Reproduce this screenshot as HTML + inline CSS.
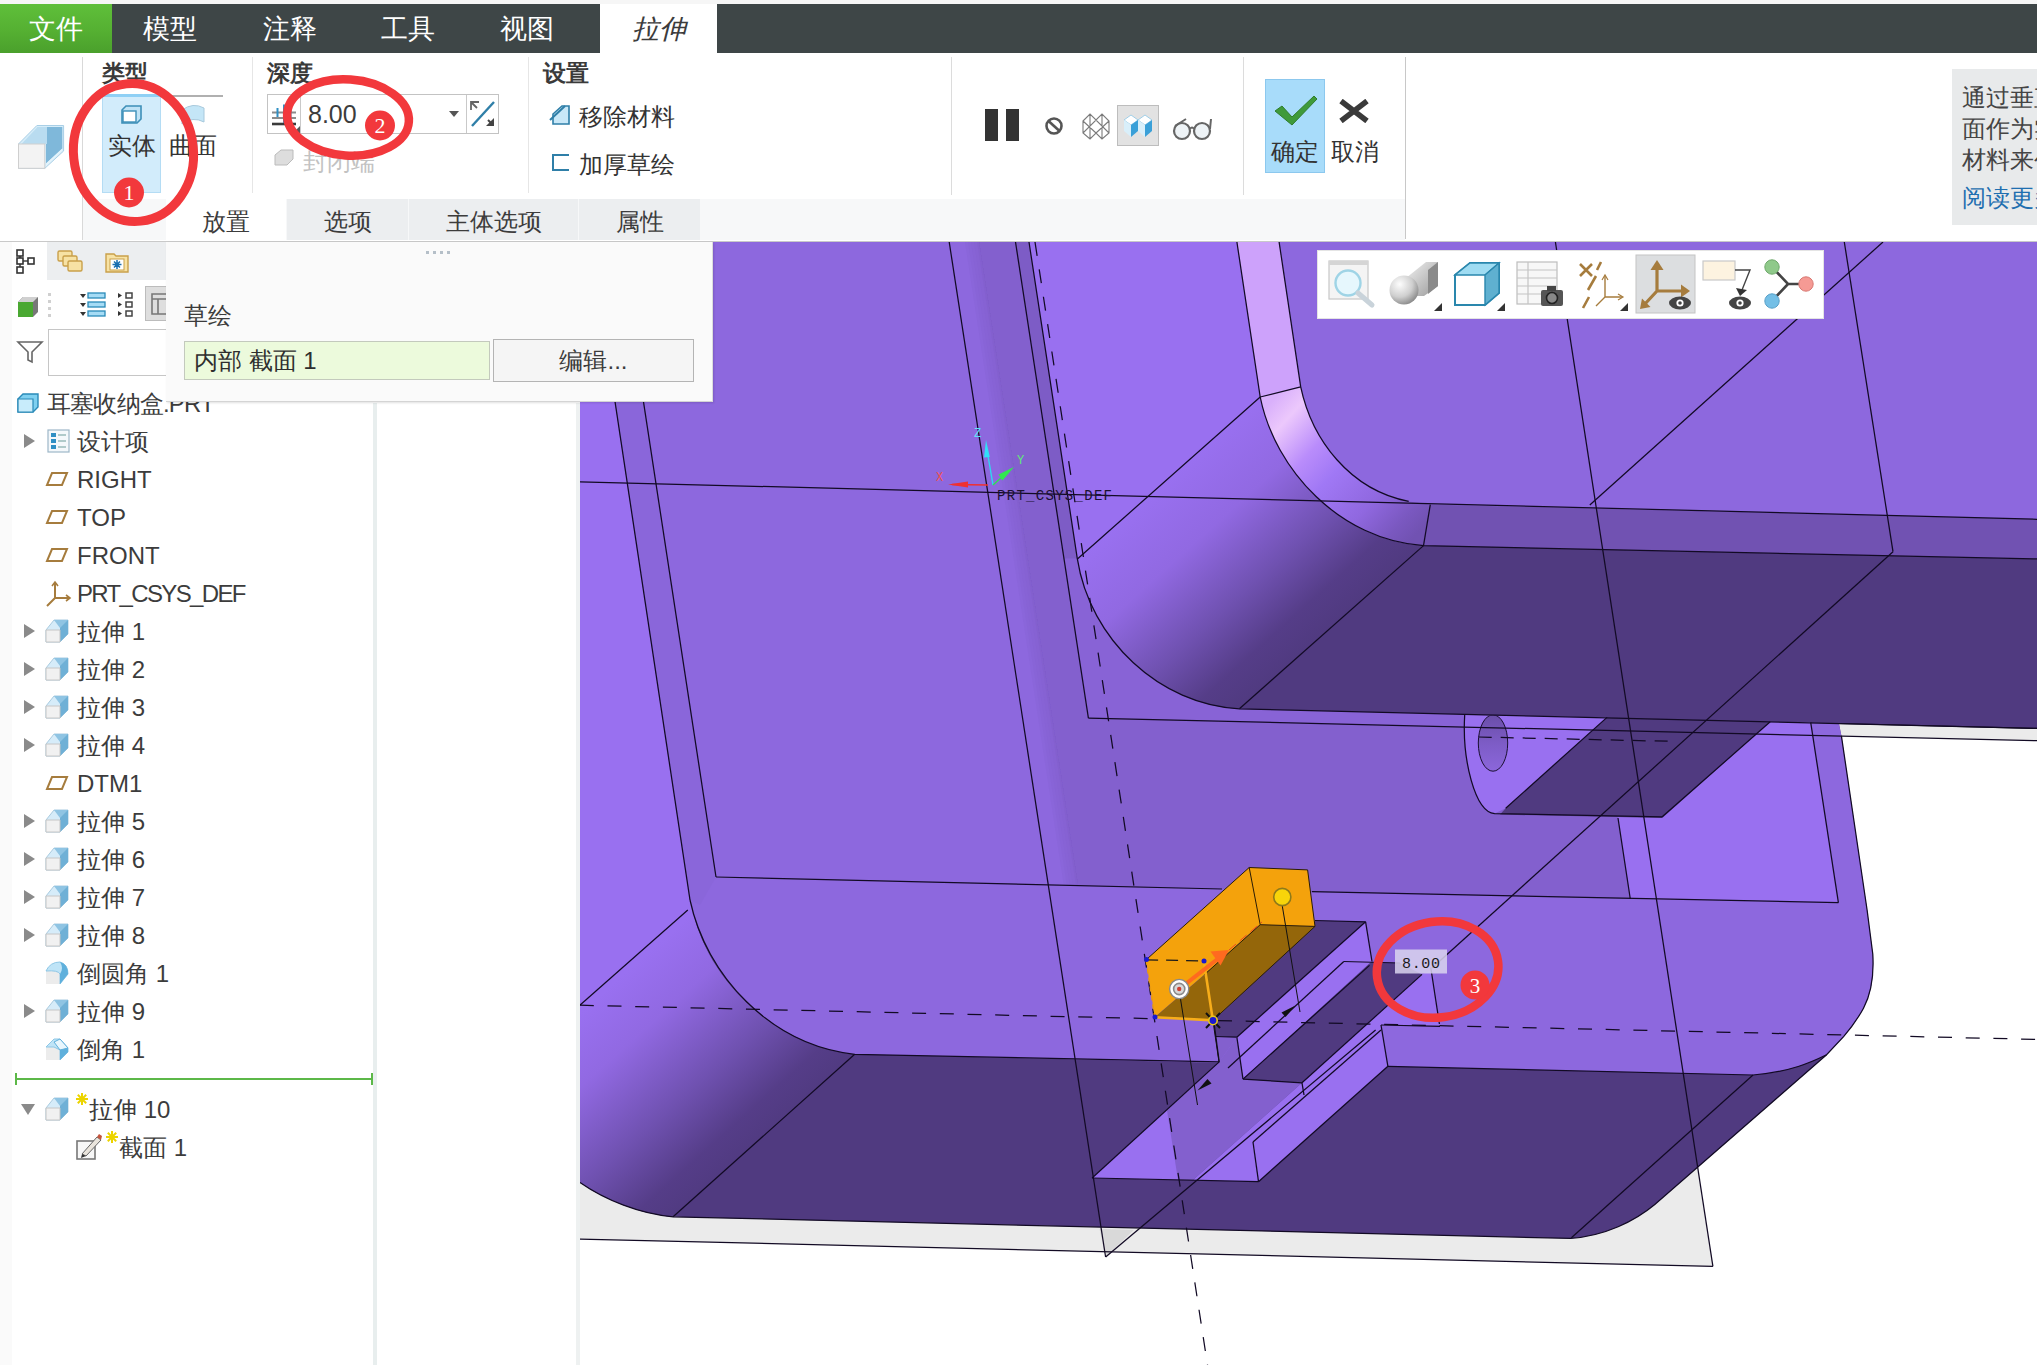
<!DOCTYPE html>
<html><head><meta charset="utf-8">
<style>
html,body{margin:0;padding:0;}
body{width:2037px;height:1365px;position:relative;overflow:hidden;background:#fff;font-family:"Liberation Sans",sans-serif;color:#3c3c3c;}
.a{position:absolute;}
.t{position:absolute;white-space:nowrap;line-height:1;}
#topbar{left:0;top:4px;width:2037px;height:49px;background:#3e4647;}
#topbar .tab{position:absolute;top:0;height:49px;line-height:51px;font-size:27px;color:#fff;text-align:center;}
#filetab{left:0;width:112px;background:linear-gradient(180deg,#5fbf3a 0%,#55b032 55%,#4aa02c 100%);}
.sub{position:absolute;top:199px;height:41px;background:#eceef0;font-size:24px;line-height:45px;text-align:center;color:#3c3c3c;}
.row{position:absolute;left:0;height:38px;width:372px;}
.row .tx{position:absolute;left:77px;top:6px;font-size:24px;line-height:28px;white-space:nowrap;color:#3c3c3c;}
.row .ar{position:absolute;left:24px;top:12px;width:0;height:0;border-left:11px solid #8a8a8a;border-top:7px solid transparent;border-bottom:7px solid transparent;}
.row > svg{position:absolute;left:44px;top:6px;}
</style></head><body>
<!-- top strip -->
<div class="a" style="left:0;top:0;width:2037px;height:4px;background:#f6f6f6"></div>
<div class="a" id="topbar">
 <div class="tab" id="filetab">文件</div>
 <div class="tab" style="left:112px;width:116px;">模型</div>
 <div class="tab" style="left:232px;width:116px;">注释</div>
 <div class="tab" style="left:350px;width:116px;">工具</div>
 <div class="tab" style="left:469px;width:116px;">视图</div>
 <div class="tab" style="left:600px;width:117px;background:#fff;color:#3c3c3c;font-style:italic;height:50px;">拉伸</div>
</div>
<!-- ribbon -->
<div class="a" style="left:82px;top:57px;width:1px;height:183px;background:#d9d9d9"></div>
<div class="a" style="left:252px;top:57px;width:1px;height:136px;background:#e6e6e6"></div>
<div class="a" style="left:528px;top:57px;width:1px;height:136px;background:#e6e6e6"></div>
<div class="a" style="left:951px;top:57px;width:1px;height:138px;background:#dcdcdc"></div>
<div class="a" style="left:1243px;top:57px;width:1px;height:138px;background:#dcdcdc"></div>
<div class="a" style="left:1405px;top:57px;width:1px;height:182px;background:#c8c8c8"></div>
<!-- big extrude icon -->
<svg class="a" style="left:16px;top:122px" width="50" height="50" viewBox="16 122 50 50">
 <polygon points="18.5,144 36.9,125.5 63.6,125.5 63.6,151 44.8,168.3 18.5,168.3" fill="#d6edf9" stroke="#a9cfe6" stroke-width="1"/>
 <polygon points="37.5,127 62.3,127 62.3,148.5 46,163.5 46,144" fill="#7fb8da"/>
 <polygon points="37.5,127 47,127 47,144 21.5,144" fill="#b9dcf0"/>
 <polygon points="46,163.5 62.3,148.5 62.3,150.5 46,166.5" fill="#e3f3fb"/>
 <rect x="18.5" y="144" width="26.3" height="24.3" fill="#f3f3f3" stroke="#cfcfcf" stroke-width="1"/>
</svg>
<div class="t" style="left:102px;top:62px;font-size:23px;font-weight:bold;color:#3a3a3a">类型</div>
<div class="t" style="left:267px;top:62px;font-size:23px;font-weight:bold;color:#3a3a3a">深度</div>
<div class="t" style="left:543px;top:62px;font-size:23px;font-weight:bold;color:#3a3a3a">设置</div>
<!-- solid button -->
<div class="a" style="left:102px;top:94px;width:59px;height:99px;background:#d2ecfb;border-top:3px solid #8fd0f5;box-sizing:border-box;border-left:1px solid #b4dcf4;border-right:1px solid #b4dcf4;border-bottom:1px solid #b4dcf4"></div>
<div class="a" style="left:162px;top:95px;width:61px;height:2px;background:#b0b0b0"></div>
<svg class="a" style="left:120px;top:104px" width="24" height="22" viewBox="0 0 24 22"><polygon points="2,6 6,2 21,2 21,15 17,19 2,19" fill="#bfe3f6" stroke="#3d8fb8" stroke-width="1.6"/><rect x="3" y="7" width="13" height="11" fill="#fff" stroke="#3d8fb8" stroke-width="1.4"/></svg>
<svg class="a" style="left:180px;top:104px" width="26" height="22" viewBox="0 0 26 22"><path d="M2,6 Q13,-2 24,4 L24,18 Q13,12 2,20 Z" fill="#c4e6f7" stroke="#a8c9dc" stroke-width="1"/></svg>
<div class="t" style="left:108px;top:134px;font-size:24px;color:#333">实体</div>
<div class="t" style="left:169px;top:134px;font-size:24px;color:#333">曲面</div>
<!-- depth input -->
<div class="a" style="left:267px;top:94px;width:232px;height:40px;border:1px solid #c3c3c3;box-sizing:border-box;background:#fff"></div>
<div class="a" style="left:300px;top:95px;width:1px;height:38px;background:#c9c9c9"></div>
<div class="a" style="left:466px;top:95px;width:1px;height:38px;background:#c9c9c9"></div>
<svg class="a" style="left:268px;top:98px" width="34" height="36" viewBox="268 98 34 36"><path d="M272,112.5 H296 M272,118 H296" stroke="#8c8c8c" stroke-width="2" fill="none"/><path d="M272,124 H296" stroke="#3a3a3a" stroke-width="2.6" fill="none"/><path d="M284,104.5 V123 M277.5,108 V117 M290.5,108 V117" stroke="#2f8fc4" stroke-width="2" fill="none"/><polygon points="293,133 300,133 300,126" fill="#555"/></svg>
<div class="t" style="left:308px;top:102px;font-size:25px;color:#3c3c3c">8.00</div>
<div class="a" style="left:449px;top:111px;width:0;height:0;border-top:6px solid #555;border-left:5px solid transparent;border-right:5px solid transparent"></div>
<svg class="a" style="left:468px;top:98px" width="30" height="32" viewBox="0 0 30 32"><path d="M4,28 L26,4" stroke="#2f7fa8" stroke-width="2.4" fill="none"/><path d="M3,12 L3,4 L11,4 M3,4 L9,10" stroke="#666" stroke-width="1.8" fill="none"/><polygon points="26,28 18,28 26,20" fill="#444"/><path d="M20,22 L25,27" stroke="#444" stroke-width="2"/></svg>
<svg class="a" style="left:273px;top:147px" width="22" height="20" viewBox="0 0 22 20"><polygon points="2,8 8,3 20,3 20,12 14,18 2,18" fill="#ddd" stroke="#bbb"/></svg>
<div class="t" style="left:303px;top:150px;font-size:24px;color:#c2c2c2">封闭端</div>
<!-- settings -->
<svg class="a" style="left:548px;top:104px" width="24" height="22" viewBox="0 0 24 22"><polygon points="5,20 5,10 14,2 21,2 21,20" fill="#c9e8f8" stroke="#2f7fa8" stroke-width="1.6"/><path d="M2,16 L17,2" stroke="#2f7fa8" stroke-width="2"/></svg>
<div class="t" style="left:579px;top:105px;font-size:24px;color:#333">移除材料</div>
<svg class="a" style="left:550px;top:152px" width="22" height="22" viewBox="0 0 22 22"><path d="M19,3 H3 V18 H19" stroke="#2f7fa8" stroke-width="2" fill="none"/></svg>
<div class="t" style="left:579px;top:153px;font-size:24px;color:#333">加厚草绘</div>
<!-- controls -->
<div class="a" style="left:985px;top:109px;width:13px;height:32px;background:#333"></div>
<div class="a" style="left:1006px;top:109px;width:13px;height:32px;background:#333"></div>
<svg class="a" style="left:1042px;top:114px" width="24" height="24" viewBox="0 0 24 24"><circle cx="12" cy="12" r="7.5" fill="none" stroke="#555" stroke-width="2.6"/><path d="M6.5,7 L17.5,17" stroke="#555" stroke-width="2.6"/></svg>
<svg class="a" style="left:1080px;top:111px" width="32" height="30" viewBox="0 0 32 30"><path d="M3,10 L10,3 L16,9 L22,3 L29,10 L29,22 L22,28 L16,22 L10,28 L3,22 Z M10,3 V28 M22,3 V28 M3,10 L16,22 M29,10 L16,22 M3,22 L16,9 L29,22" stroke="#7b7b7b" stroke-width="1.1" fill="none"/></svg>
<div class="a" style="left:1117px;top:105px;width:42px;height:41px;background:#e2e2e2;border:1px solid #bdbdbd;box-sizing:border-box"></div>
<svg class="a" style="left:1122px;top:112px" width="32" height="28" viewBox="0 0 32 28"><polygon points="2,8 9,3 16,8 9,13" fill="#fff" stroke="#8cc7e6" stroke-width=".8"/><polygon points="2,8 9,13 9,25 2,19" fill="#d9effa"/><polygon points="9,13 16,8 16,19 9,25" fill="#3aa0d8"/><polygon points="16,8 23,3 30,8 23,13" fill="#fff" stroke="#8cc7e6" stroke-width=".8"/><polygon points="16,8 23,13 23,25 16,19" fill="#d9effa"/><polygon points="23,13 30,8 30,19 23,25" fill="#3aa0d8"/></svg>
<svg class="a" style="left:1170px;top:114px" width="46" height="30" viewBox="0 0 46 30"><circle cx="12" cy="17" r="8" fill="#eef3f6" stroke="#666" stroke-width="2.2"/><circle cx="32" cy="17" r="8" fill="#eef3f6" stroke="#666" stroke-width="2.2"/><path d="M20,15 Q22,12 24,15 M5,12 L16,5 M40,15 L41,5" stroke="#666" stroke-width="2" fill="none"/></svg>
<div class="a" style="left:1265px;top:79px;width:60px;height:94px;background:#a8dcfa;border:1px solid #8cc8ee;box-sizing:border-box"></div>
<svg class="a" style="left:1272px;top:93px" width="48" height="34" viewBox="0 0 48 34"><path d="M3,18 L10,13 L20,24 L42,3 L45,6 L20,32 Z" fill="#3f9a3a" stroke="#2f7d2d" stroke-width="1"/></svg>
<div class="t" style="left:1271px;top:140px;font-size:24px;color:#333">确定</div>
<svg class="a" style="left:1338px;top:99px" width="32" height="24" viewBox="0 0 32 24"><path d="M3,2 L29,22 M29,2 L3,22" stroke="#3a3a3a" stroke-width="5.5"/></svg>
<div class="t" style="left:1331px;top:140px;font-size:24px;color:#333">取消</div>
<!-- help box -->
<div class="a" style="left:1952px;top:69px;width:85px;height:156px;background:#e8eaeb"></div>
<div class="t" style="left:1962px;top:86px;font-size:24px;color:#444">通过垂直</div>
<div class="t" style="left:1962px;top:117px;font-size:24px;color:#444">面作为实</div>
<div class="t" style="left:1962px;top:148px;font-size:24px;color:#444">材料来创</div>
<div class="t" style="left:1962px;top:186px;font-size:24px;color:#1f6fb0">阅读更多</div>
<!-- subtabs -->
<div class="a" style="left:83px;top:199px;width:1322px;height:41px;background:#f7f8f9"></div>
<div class="sub" style="left:166px;width:120px;background:#fff">放置</div>
<div class="sub" style="left:287px;width:121px">选项</div>
<div class="sub" style="left:409px;width:169px">主体选项</div>
<div class="sub" style="left:579px;width:121px">属性</div>
<div class="a" style="left:0;top:241px;width:2037px;height:1px;background:#c9c9c9"></div>
<!-- left panel -->
<div class="a" style="left:0;top:242px;width:12px;height:1123px;background:#fafafa"></div>
<div class="a" style="left:47px;top:242px;width:119px;height:38px;background:#eceef0"></div>
<svg class="a" style="left:15px;top:248px" width="24" height="26" viewBox="0 0 24 26"><path d="M5,6 V22 M5,13 H13 " stroke="#444" stroke-width="1.6" fill="none"/><rect x="2" y="2" width="6" height="6" fill="#fff" stroke="#333" stroke-width="1.6"/><rect x="2" y="10" width="6" height="6" fill="#fff" stroke="#333" stroke-width="1.6"/><rect x="2" y="19" width="6" height="6" fill="#fff" stroke="#333" stroke-width="1.6"/><rect x="13" y="10" width="6" height="6" fill="#fff" stroke="#333" stroke-width="1.6"/></svg>
<svg class="a" style="left:56px;top:248px" width="28" height="26" viewBox="0 0 28 26"><rect x="2" y="3" width="14" height="10" rx="1.5" fill="#f7e2a4" stroke="#c9a04a" stroke-width="1.4"/><rect x="7" y="8" width="14" height="10" rx="1.5" fill="#f7e2a4" stroke="#c9a04a" stroke-width="1.4"/><rect x="12" y="13" width="14" height="10" rx="1.5" fill="#f7e2a4" stroke="#c9a04a" stroke-width="1.4"/></svg>
<svg class="a" style="left:104px;top:250px" width="26" height="24" viewBox="0 0 26 24"><path d="M2,4 H10 L12,6 H24 V22 H2 Z" fill="#f7e2a4" stroke="#c9a04a" stroke-width="1.4"/><rect x="6" y="9" width="14" height="11" fill="#fff" stroke="#c9a04a" stroke-width="1"/><path d="M13,10 V19 M8.5,14.5 H17.5 M10,11.5 L16,17.5 M16,11.5 L10,17.5" stroke="#1b6fb0" stroke-width="1.5"/></svg>
<svg class="a" style="left:16px;top:295px" width="24" height="24" viewBox="0 0 24 24"><polygon points="2,7 7,2 22,2 22,17 17,22 2,22" fill="#777" /><polygon points="2,7 17,7 17,22 2,22" fill="#4aa832"/><polygon points="2,7 7,2 22,2 17,7" fill="#d0d0d0"/></svg>
<div class="a" style="left:48px;top:293px;width:3px;height:26px;background:repeating-linear-gradient(180deg,#d0d0d0 0 3px,transparent 3px 7px)"></div>
<svg class="a" style="left:79px;top:291px" width="28" height="28" viewBox="0 0 28 28"><rect x="9" y="2" width="17" height="5" fill="#a6dcf5" stroke="#2a8ab8" stroke-width="1.3"/><rect x="9" y="11" width="17" height="5" fill="#a6dcf5" stroke="#2a8ab8" stroke-width="1.3"/><rect x="9" y="20" width="17" height="5" fill="#a6dcf5" stroke="#2a8ab8" stroke-width="1.3"/><polygon points="1,3 7,3 4,7" fill="#333"/><polygon points="1,12 7,12 4,16" fill="#333"/><polygon points="1,21 7,21 4,25" fill="#333"/></svg>
<svg class="a" style="left:117px;top:291px" width="18" height="28" viewBox="0 0 18 28"><rect x="9" y="2" width="6" height="5" fill="#fff" stroke="#444" stroke-width="1.5"/><rect x="9" y="11" width="6" height="5" fill="#fff" stroke="#444" stroke-width="1.5"/><rect x="9" y="20" width="6" height="5" fill="#fff" stroke="#444" stroke-width="1.5"/><polygon points="1,2 5,4.5 1,7" fill="#333"/><polygon points="1,11 5,13.5 1,16" fill="#333"/><polygon points="1,20 5,22.5 1,25" fill="#333"/></svg>
<div class="a" style="left:145px;top:286px;width:30px;height:35px;background:#dedede;border:1px solid #bcbcbc;box-sizing:border-box"></div>
<svg class="a" style="left:150px;top:292px" width="20" height="24" viewBox="0 0 20 24"><path d="M2,2 H18 V22 H2 Z M2,7 H18 M8,7 V22" fill="none" stroke="#777" stroke-width="1.6"/></svg>
<svg class="a" style="left:16px;top:340px" width="28" height="24" viewBox="0 0 28 24"><path d="M2,2 H26 L16,12 V22 L12,20 V12 Z" fill="#fff" stroke="#666" stroke-width="1.6"/></svg>
<div class="a" style="left:48px;top:329px;width:140px;height:47px;border:1px solid #c6c6c6;box-sizing:border-box;background:#fff"></div>
<div class="row" style="top:384px"><span style="position:absolute;left:16px;top:7px"><svg width="24" height="24" viewBox="0 0 24 24"><polygon points="2,8 7,3 22,3 22,16 17,21 2,21" fill="#7fd0f0" stroke="#2a8ab8" stroke-width="1.4"/><polygon points="2,8 17,8 17,21 2,21" fill="#c8ecfb" stroke="#2a8ab8" stroke-width="1.2"/></svg></span><span class="tx" style="left:47px;letter-spacing:-0.8px">耳塞收纳盒.PRT</span></div>
<div class="row" style="top:422px"><span class="ar"></span><svg width="26" height="26" viewBox="-2 0 26 26"><rect x="2" y="2" width="21" height="22" fill="#f4f8fb" stroke="#9db7c8" stroke-width="1.2"/><rect x="5" y="5" width="5" height="4" fill="#2f8fc4"/><rect x="5" y="11" width="5" height="4" fill="#2f8fc4"/><rect x="5" y="17" width="5" height="4" fill="#2f8fc4"/><path d="M12,7 H20 M12,13 H20 M12,19 H20" stroke="#9bb" stroke-width="1.4"/></svg><span class="tx">设计项</span></div>
<div class="row" style="top:460px"><svg width="26" height="26" viewBox="0 0 26 26"><polygon points="8,7 23,7 18,19 3,19" fill="none" stroke="#a67c3d" stroke-width="2"/></svg><span class="tx">RIGHT</span></div>
<div class="row" style="top:498px"><svg width="26" height="26" viewBox="0 0 26 26"><polygon points="8,7 23,7 18,19 3,19" fill="none" stroke="#a67c3d" stroke-width="2"/></svg><span class="tx">TOP</span></div>
<div class="row" style="top:536px"><svg width="26" height="26" viewBox="0 0 26 26"><polygon points="8,7 23,7 18,19 3,19" fill="none" stroke="#a67c3d" stroke-width="2"/></svg><span class="tx">FRONT</span></div>
<div class="row" style="top:574px"><svg width="28" height="28" viewBox="0 0 28 28"><path d="M11,3 V18 H26 M11,18 L3,26" fill="none" stroke="#a67c3d" stroke-width="2"/><path d="M8,6 L11,2 L14,6 M22,15 L26,18 L22,21" fill="none" stroke="#a67c3d" stroke-width="1.6"/></svg><span class="tx" style="letter-spacing:-1.65px">PRT_CSYS_DEF</span></div>
<div class="row" style="top:612px"><span class="ar"></span><svg width="26" height="26" viewBox="0 0 26 26"><polygon points="2,12 10,2 24,2 24,16 16,24 2,24" fill="#d6ecf9" stroke="#a9cbe0" stroke-width="1"/><polygon points="10,2 24,2 24,16 16,10" fill="#8fc4e3"/><polygon points="16,10 24,2 24,16 16,24" fill="#6fb0d6"/><polygon points="2,12 16,12 16,24 2,24" fill="#f1f1f1" stroke="#c6c6c6" stroke-width="1"/></svg><span class="tx">拉伸 1</span></div>
<div class="row" style="top:650px"><span class="ar"></span><svg width="26" height="26" viewBox="0 0 26 26"><polygon points="2,12 10,2 24,2 24,16 16,24 2,24" fill="#d6ecf9" stroke="#a9cbe0" stroke-width="1"/><polygon points="10,2 24,2 24,16 16,10" fill="#8fc4e3"/><polygon points="16,10 24,2 24,16 16,24" fill="#6fb0d6"/><polygon points="2,12 16,12 16,24 2,24" fill="#f1f1f1" stroke="#c6c6c6" stroke-width="1"/></svg><span class="tx">拉伸 2</span></div>
<div class="row" style="top:688px"><span class="ar"></span><svg width="26" height="26" viewBox="0 0 26 26"><polygon points="2,12 10,2 24,2 24,16 16,24 2,24" fill="#d6ecf9" stroke="#a9cbe0" stroke-width="1"/><polygon points="10,2 24,2 24,16 16,10" fill="#8fc4e3"/><polygon points="16,10 24,2 24,16 16,24" fill="#6fb0d6"/><polygon points="2,12 16,12 16,24 2,24" fill="#f1f1f1" stroke="#c6c6c6" stroke-width="1"/></svg><span class="tx">拉伸 3</span></div>
<div class="row" style="top:726px"><span class="ar"></span><svg width="26" height="26" viewBox="0 0 26 26"><polygon points="2,12 10,2 24,2 24,16 16,24 2,24" fill="#d6ecf9" stroke="#a9cbe0" stroke-width="1"/><polygon points="10,2 24,2 24,16 16,10" fill="#8fc4e3"/><polygon points="16,10 24,2 24,16 16,24" fill="#6fb0d6"/><polygon points="2,12 16,12 16,24 2,24" fill="#f1f1f1" stroke="#c6c6c6" stroke-width="1"/></svg><span class="tx">拉伸 4</span></div>
<div class="row" style="top:764px"><svg width="26" height="26" viewBox="0 0 26 26"><polygon points="8,7 23,7 18,19 3,19" fill="none" stroke="#a67c3d" stroke-width="2"/></svg><span class="tx">DTM1</span></div>
<div class="row" style="top:802px"><span class="ar"></span><svg width="26" height="26" viewBox="0 0 26 26"><polygon points="2,12 10,2 24,2 24,16 16,24 2,24" fill="#d6ecf9" stroke="#a9cbe0" stroke-width="1"/><polygon points="10,2 24,2 24,16 16,10" fill="#8fc4e3"/><polygon points="16,10 24,2 24,16 16,24" fill="#6fb0d6"/><polygon points="2,12 16,12 16,24 2,24" fill="#f1f1f1" stroke="#c6c6c6" stroke-width="1"/></svg><span class="tx">拉伸 5</span></div>
<div class="row" style="top:840px"><span class="ar"></span><svg width="26" height="26" viewBox="0 0 26 26"><polygon points="2,12 10,2 24,2 24,16 16,24 2,24" fill="#d6ecf9" stroke="#a9cbe0" stroke-width="1"/><polygon points="10,2 24,2 24,16 16,10" fill="#8fc4e3"/><polygon points="16,10 24,2 24,16 16,24" fill="#6fb0d6"/><polygon points="2,12 16,12 16,24 2,24" fill="#f1f1f1" stroke="#c6c6c6" stroke-width="1"/></svg><span class="tx">拉伸 6</span></div>
<div class="row" style="top:878px"><span class="ar"></span><svg width="26" height="26" viewBox="0 0 26 26"><polygon points="2,12 10,2 24,2 24,16 16,24 2,24" fill="#d6ecf9" stroke="#a9cbe0" stroke-width="1"/><polygon points="10,2 24,2 24,16 16,10" fill="#8fc4e3"/><polygon points="16,10 24,2 24,16 16,24" fill="#6fb0d6"/><polygon points="2,12 16,12 16,24 2,24" fill="#f1f1f1" stroke="#c6c6c6" stroke-width="1"/></svg><span class="tx">拉伸 7</span></div>
<div class="row" style="top:916px"><span class="ar"></span><svg width="26" height="26" viewBox="0 0 26 26"><polygon points="2,12 10,2 24,2 24,16 16,24 2,24" fill="#d6ecf9" stroke="#a9cbe0" stroke-width="1"/><polygon points="10,2 24,2 24,16 16,10" fill="#8fc4e3"/><polygon points="16,10 24,2 24,16 16,24" fill="#6fb0d6"/><polygon points="2,12 16,12 16,24 2,24" fill="#f1f1f1" stroke="#c6c6c6" stroke-width="1"/></svg><span class="tx">拉伸 8</span></div>
<div class="row" style="top:954px"><svg width="26" height="26" viewBox="0 0 26 26"><rect x="2" y="11" width="14" height="13" fill="#ececec"/><path d="M2,11 Q6,2 16,2 Q24,4 24,14 L16,24 L16,14 Q14,10 2,11 Z" fill="#bfe4f7" stroke="#8ec7e6" stroke-width="1"/><path d="M16,24 L24,14 Q24,4 16,2 Q20,8 16,14 Z" fill="#5fb0dc"/></svg><span class="tx">倒圆角 1</span></div>
<div class="row" style="top:992px"><span class="ar"></span><svg width="26" height="26" viewBox="0 0 26 26"><polygon points="2,12 10,2 24,2 24,16 16,24 2,24" fill="#d6ecf9" stroke="#a9cbe0" stroke-width="1"/><polygon points="10,2 24,2 24,16 16,10" fill="#8fc4e3"/><polygon points="16,10 24,2 24,16 16,24" fill="#6fb0d6"/><polygon points="2,12 16,12 16,24 2,24" fill="#f1f1f1" stroke="#c6c6c6" stroke-width="1"/></svg><span class="tx">拉伸 9</span></div>
<div class="row" style="top:1030px"><svg width="26" height="26" viewBox="0 0 26 26"><rect x="2" y="11" width="14" height="13" fill="#ececec"/><polygon points="2,11 10,3 16,3 24,12 24,16 16,24 16,14 10,11" fill="#bfe4f7" stroke="#8ec7e6" stroke-width="1"/><polygon points="16,3 24,12 16,14 10,6" fill="#e8f6fd" stroke="#5fb0dc" stroke-width="1"/><polygon points="16,14 24,12 24,16 16,24" fill="#5fb0dc"/></svg><span class="tx">倒角 1</span></div>
<div class="row" style="top:1090px"><span class="ar" style="left:21px;top:14px;border-left:7px solid transparent;border-right:7px solid transparent;border-top:11px solid #8a8a8a;border-bottom:0"></span><svg width="26" height="26" viewBox="0 0 26 26"><polygon points="2,12 10,2 24,2 24,16 16,24 2,24" fill="#d6ecf9" stroke="#a9cbe0" stroke-width="1"/><polygon points="10,2 24,2 24,16 16,10" fill="#8fc4e3"/><polygon points="16,10 24,2 24,16 16,24" fill="#6fb0d6"/><polygon points="2,12 16,12 16,24 2,24" fill="#f1f1f1" stroke="#c6c6c6" stroke-width="1"/></svg><svg width="12" height="12" viewBox="0 0 12 12" style="position:absolute;left:76px;top:3px"><path d="M6,0 V12 M0,6 H12 M1.8,1.8 L10.2,10.2 M10.2,1.8 L1.8,10.2" stroke="#ecd400" stroke-width="2"/></svg><span class="tx" style="left:89px">拉伸 10</span></div>
<div class="row" style="top:1128px"><span style="position:absolute;left:75px;top:5px"><svg width="28" height="28" viewBox="0 0 28 28"><rect x="2" y="8" width="18" height="18" fill="#f7f7f7" stroke="#777" stroke-width="1.6"/><path d="M7,21 L22,4 L26,7 L11,23 Z" fill="#e9e4dc" stroke="#666" stroke-width="1"/><polygon points="22,4 26,7 27,3 24,1" fill="#c4543c"/><polygon points="7,21 11,23 6,25" fill="#333"/></svg></span><svg width="12" height="12" viewBox="0 0 12 12" style="position:absolute;left:106px;top:3px"><path d="M6,0 V12 M0,6 H12 M1.8,1.8 L10.2,10.2 M10.2,1.8 L1.8,10.2" stroke="#ecd400" stroke-width="2"/></svg><span class="tx" style="left:119px">截面 1</span></div><!-- dividers -->
<div class="a" style="left:373px;top:403px;width:4px;height:962px;background:#e8eeee"></div>
<div class="a" style="left:576px;top:403px;width:4px;height:962px;background:#eef1f1"></div>
<div class="a" style="left:16px;top:1078px;width:357px;height:2px;background:#5cb848"></div>
<div class="a" style="left:15px;top:1073px;width:2px;height:12px;background:#5cb848"></div>
<div class="a" style="left:371px;top:1073px;width:2px;height:12px;background:#5cb848"></div>
<svg class="a" style="left:580px;top:242px" width="1457" height="1123" viewBox="580 242 1457 1123" shape-rendering="geometricPrecision">
<defs>
<linearGradient id="gc1" gradientUnits="userSpaceOnUse" x1="640" y1="960" x2="786" y2="1123">
 <stop offset="0" stop-color="#9970f0"/><stop offset="0.25" stop-color="#9169e2"/><stop offset="0.6" stop-color="#6f51b0"/><stop offset="0.85" stop-color="#553d88"/><stop offset="1" stop-color="#503a80"/></linearGradient>
<linearGradient id="gc2" gradientUnits="userSpaceOnUse" x1="1168" y1="478" x2="1315" y2="642">
 <stop offset="0" stop-color="#9970f0"/><stop offset="0.3" stop-color="#9169e2"/><stop offset="0.62" stop-color="#6f51b0"/><stop offset="0.85" stop-color="#553d88"/><stop offset="1" stop-color="#503a80"/></linearGradient>
<linearGradient id="gf" gradientUnits="userSpaceOnUse" x1="1280" y1="392" x2="1425" y2="525">
 <stop offset="0" stop-color="#d9b0fb"/><stop offset="0.12" stop-color="#ecc8fc"/><stop offset="0.32" stop-color="#b98cfb"/><stop offset="0.48" stop-color="#a078f5"/><stop offset="0.72" stop-color="#9068e0"/><stop offset="0.9" stop-color="#7a58c0"/><stop offset="1" stop-color="#7152b2"/></linearGradient>
<linearGradient id="gm" gradientUnits="userSpaceOnUse" x1="0" y1="0" x2="1" y2="0"><stop offset="0" stop-color="#8d68de"/><stop offset="1" stop-color="#8360ce"/></linearGradient>
</defs>
<rect x="580" y="242" width="1457" height="1123" fill="#fff"/>
<polygon points="580.0,1100.0 1687.0,1100.0 1712.9,1266.4 580.0,1239.0" fill="#ebebeb"/>
<polygon points="1838.9,723.5 2037.0,728.4 2037.0,740.7 1841.4,735.8" fill="#ebebeb"/>
<path d="M580,242 L2037,242 L2037,728.4 L1838.9,723.5 L1841.4,735.8 L1867.1,910 L1872.8,954.2 C1874,975 1872,992 1863.5,1008.2 C1857,1020 1851,1028 1843.8,1036.4 L1826.6,1054.8 L1654.8,1204.5 C1635,1221 1605,1236 1570.5,1238.4 L673.1,1216.8 C640,1214 605,1200 580,1182.5 Z" fill="#503a80"/>
<polygon points="580.0,242.0 591.0,242.0 690.0,900.0 692.7,910.0 687.8,910.0 580.0,1005.2 580.0,1010.0" fill="#9970f0"/>
<path d="M580,1005.2 L687.8,910 L692.7,910 C706,975 770,1045 854.7,1054.3 L673.1,1216.8 C640,1214 605,1200 580,1182.5 Z" fill="url(#gc1)"/>
<path d="M591,242 L690,900 C706,975 770,1045 854.7,1054.3 L1753,1075 C1790,1072 1812,1062 1826.6,1054.8 L1843.8,1036.4 C1851,1028 1857,1020 1863.5,1008.2 C1872,992 1874,975 1872.8,954.2 L1867.1,910 L1841.4,735.8 L1838.9,723.5 L2037,728.4 L2037,242 Z" fill="#8d68de"/>
<polygon points="591.0,242.0 619.1,242.0 716.0,877.0 1838.4,902.7 1810.7,722.3 1838.9,723.5 1841.4,735.8 1867.1,910.0 1860.0,930.0 700.0,905.0 690.0,900.0" fill="#8a66da" opacity="0"/>
<polygon points="591.0,242.0 619.1,242.0 716.0,877.0 700.0,905.0 690.0,900.0" fill="#8a66da"/>
<polygon points="977.0,242.0 1015.5,242.0 1088.4,718.1 1600.0,731.0 1618.0,818.0 1630.3,899.0 1076.0,886.0" fill="#8360ce"/>
<polygon points="965.0,242.0 979.0,242.0 1078.0,886.0 1064.0,886.0" fill="#8360ce" opacity="0.25"/>
<polygon points="968.0,242.0 979.0,242.0 1078.0,886.0 1067.0,886.0" fill="#8360ce" opacity="0.25"/>
<polygon points="971.0,242.0 979.0,242.0 1078.0,886.0 1070.0,886.0" fill="#8360ce" opacity="0.25"/>
<polygon points="974.0,242.0 979.0,242.0 1078.0,886.0 1073.0,886.0" fill="#8360ce" opacity="0.25"/>
<polygon points="1015.5,242.0 1029.0,242.0 1077.3,558.7 1064.0,558.7" fill="#7d5cc6"/>
<path d="M1064,558.7 L1077.3,558.7 C1090,640 1160,705 1239.4,708.8 L1600,717.5 L1600,731 L1088.4,718.1 Z" fill="#8863d6"/>
<polygon points="1029.0,242.0 1236.9,242.0 1260.2,397.0 1077.3,558.7" fill="#9970f0"/>
<path d="M1260.2,397 C1275,470 1340,540 1423.5,545.6 L1239.4,708.8 C1160,705 1090,640 1077.3,558.7 Z" fill="url(#gc2)"/>
<polygon points="1423.5,545.6 2037.0,559.0 2037.0,728.4 1838.9,723.5 1239.4,708.8" fill="#503a80"/>
<polygon points="1430.3,504.6 2037.0,519.3 2037.0,559.0 1423.5,545.6" fill="#7152b2"/>
<polygon points="1236.9,242.0 1279.1,242.0 1300.7,386.8 1260.2,397.0" fill="#cda2fb"/>
<path d="M1260.2,397 L1300.7,386.8 C1312,440 1350,490 1408.7,501.4 L1430.3,504.6 L1423.5,545.6 C1340,540 1275,470 1260.2,397 Z" fill="url(#gf)"/>
<polygon points="1600.0,731.0 1770.2,721.8 1810.7,722.3 1838.4,902.7 1630.3,899.0 1618.0,818.0" fill="#9970f0"/>
<path d="M1464.7,715 C1462,760 1475,812 1494.6,813.6 L1505.7,808.2 L1570,751.7 L1607,717.4 Z" fill="#9970f0"/>
<polygon points="1537.0,716.9 1607.0,717.4 1537.0,781.2" fill="#9970f0"/>
<clipPath id="hc"><rect x="1470" y="715.6" width="50" height="70"/></clipPath>
<linearGradient id="hg" gradientUnits="userSpaceOnUse" x1="0" y1="715" x2="0" y2="772"><stop offset="0" stop-color="#6a4ea8"/><stop offset="0.5" stop-color="#7d5cc6"/><stop offset="1" stop-color="#8c67dc"/></linearGradient>
<ellipse cx="1493" cy="743" rx="14.7" ry="28.2" fill="url(#hg)" stroke="#1a1030" stroke-width="1" clip-path="url(#hc)"/>
<polygon points="1607.0,717.4 1770.2,721.8 1662.2,818.0 1500.0,814.6 1505.7,808.2" fill="#503a80"/>
<polygon points="1219.2,1061.9 1236.9,1037.4 1243.0,1079.1 1302.0,1082.8 1192.7,1180.2 1092.1,1178.0" fill="#8360ce"/>
<polygon points="1092.1,1178.0 1167.0,1110.5 1178.0,1179.9" fill="#9970f0"/>
<polygon points="1315.0,920.5 1365.6,921.8 1236.8,1037.2 1215.0,1036.5 1213.7,1020.5" fill="#503a80"/>
<polygon points="1365.6,921.8 1372.0,961.5 1243.0,1079.1 1236.8,1037.2" fill="#9970f0"/>
<polygon points="1371.0,962.0 1400.0,963.0 1422.0,974.4 1302.0,1082.8 1243.0,1079.1" fill="#503a80"/>
<polygon points="1422.0,974.4 1432.3,969.2 1440.0,1025.0 1381.0,1025.0 1387.9,1066.3 1258.5,1181.7 1192.7,1180.2 1302.0,1082.8" fill="#9970f0"/>
<polygon points="1215.0,1036.5 1236.8,1037.2 1219.2,1061.9" fill="#8360ce"/>
<polygon points="1219.2,1061.9 1092.1,1178.0 1258.5,1181.7 1387.9,1066.3 1400.0,1100.0 1100.0,1200.0" fill="none"/>
<polygon points="1099.5,1228.8 1133.8,1230.0 1105.6,1257.0" fill="#d9d9d9"/><path d="M591.0,242.0 L690.0,900.0" stroke="#120a24" stroke-width="1.25" fill="none"/>
<path d="M690,900 C706,975 770,1045 854.7,1054.3 L1219.2,1061.9" stroke="#120a24" stroke-width="1.25" fill="none"/>
<path d="M1387.9,1066.3 L1753.0,1075.0" stroke="#120a24" stroke-width="1.25" fill="none"/>
<path d="M1753,1075 C1790,1072 1812,1062 1826.6,1054.8 L1843.8,1036.4 C1851,1028 1857,1020 1863.5,1008.2 C1872,992 1874,975 1872.8,954.2 L1867.1,910 L1841.4,735.8" stroke="#120a24" stroke-width="1.25" fill="none"/>
<path d="M619.1,242.0 L716.0,877.0" stroke="#120a24" stroke-width="1.25" fill="none"/>
<path d="M716.0,877.0 L1222.0,889.0" stroke="#120a24" stroke-width="1.25" fill="none"/>
<path d="M1311.8,891.6 L1838.4,902.7" stroke="#120a24" stroke-width="1.25" fill="none"/>
<path d="M1838.4,902.7 L1810.7,722.3" stroke="#120a24" stroke-width="1.25" fill="none"/>
<path d="M580.0,481.8 L2037.0,519.3" stroke="#120a24" stroke-width="1.25" fill="none"/>
<path d="M949.2,242.0 L1105.6,1257.0" stroke="#120a24" stroke-width="1.25" fill="none"/>
<path d="M1015.5,242.0 L1088.4,718.1" stroke="#120a24" stroke-width="1.25" fill="none"/>
<path d="M1088.4,718.1 L2037.0,740.7" stroke="#120a24" stroke-width="1.25" fill="none"/>
<path d="M1029,242 L1077.3,558.7 C1090,640 1160,705 1239.4,708.8 L2037,728.4" stroke="#120a24" stroke-width="1.25" fill="none"/>
<path d="M1035.0,242.0 L1207.5,1365.0" stroke="#120a24" stroke-width="1.25" fill="none" stroke-dasharray="14 13.7"/>
<path d="M1236.9,242.0 L1260.2,397.0" stroke="#120a24" stroke-width="1.25" fill="none"/>
<path d="M1279.1,242.0 L1300.7,386.8" stroke="#120a24" stroke-width="1.25" fill="none"/>
<path d="M1260.2,397.0 L1300.7,386.8" stroke="#120a24" stroke-width="1.25" fill="none"/>
<path d="M1260.2,397 C1275,470 1340,540 1423.5,545.6 L2037,559" stroke="#120a24" stroke-width="1.25" fill="none"/>
<path d="M1300.7,386.8 C1312,440 1350,490 1408.7,501.4" stroke="#120a24" stroke-width="1.25" fill="none"/>
<path d="M1430.3,504.6 L1423.5,545.6" stroke="#120a24" stroke-width="1.25" fill="none"/>
<path d="M1260.2,397.0 L1077.4,559.0" stroke="#120a24" stroke-width="1.25" fill="none"/>
<path d="M1423.5,545.6 L1239.4,708.8" stroke="#120a24" stroke-width="1.25" fill="none"/>
<path d="M1555.4,242.0 L1712.9,1266.4" stroke="#120a24" stroke-width="1.25" fill="none"/>
<path d="M1883.0,242.0 L1589.8,505.0" stroke="#120a24" stroke-width="1.25" fill="none"/>
<path d="M1844.3,242.0 L1893.0,551.7" stroke="#120a24" stroke-width="1.25" fill="none"/>
<path d="M1893.0,551.7 L1432.0,968.0" stroke="#120a24" stroke-width="1.25" fill="none"/>
<path d="M854.7,1054.3 L673.1,1216.8" stroke="#120a24" stroke-width="1.25" fill="none"/>
<path d="M579.8,1005.2 L687.8,910.0" stroke="#120a24" stroke-width="1.25" fill="none"/>
<path d="M579.8,1005.2 L1150.0,1018.6" stroke="#120a24" stroke-width="1.25" fill="none" stroke-dasharray="14 13.7"/>
<path d="M1218.0,1020.6 L2037.0,1039.4" stroke="#120a24" stroke-width="1.25" fill="none" stroke-dasharray="14 13.7"/>
<path d="M1753.0,1075.0 L1571.4,1237.7" stroke="#120a24" stroke-width="1.25" fill="none"/>
<path d="M580,1182.5 C605,1200 640,1214 673.1,1216.8 L1570.5,1238.4 C1605,1236 1635,1221 1654.8,1204.5 L1826.6,1054.8" stroke="#120a24" stroke-width="1.25" fill="none"/>
<path d="M580.0,1239.0 L1712.9,1266.4" stroke="#120a24" stroke-width="1.25" fill="none"/>
<path d="M1105.6,1257.0 L1375.6,1030.0" stroke="#120a24" stroke-width="1.25" fill="none"/>
<path d="M1838.9,723.5 L2037.0,728.4" stroke="#120a24" stroke-width="1.25" fill="none"/>
<path d="M1464.7,715 C1462,760 1475,812 1494.6,813.6 L1662.2,816.8" stroke="#120a24" stroke-width="1.25" fill="none"/>
<path d="M1505.7,808.2 L1607.0,717.4" stroke="#120a24" stroke-width="1.25" fill="none"/>
<path d="M1662.2,816.8 L1770.2,721.8" stroke="#120a24" stroke-width="1.25" fill="none"/>
<path d="M1478.7,737.0 L1674.5,741.4" stroke="#120a24" stroke-width="1.25" fill="none" stroke-dasharray="13 9"/>
<path d="M1618.0,818.0 L1630.3,899.0" stroke="#120a24" stroke-width="1.25" fill="none"/>
<path d="M1315.0,920.5 L1365.6,921.8" stroke="#120a24" stroke-width="1.25" fill="none"/>
<path d="M1365.6,921.8 L1236.8,1037.2" stroke="#120a24" stroke-width="1.25" fill="none"/>
<path d="M1365.6,921.8 L1372.0,961.5" stroke="#120a24" stroke-width="1.25" fill="none"/>
<path d="M1343.8,961.5 L1400.0,963.0" stroke="#120a24" stroke-width="1.25" fill="none"/>
<path d="M1369.5,965.4 L1243.0,1079.1" stroke="#120a24" stroke-width="1.25" fill="none"/>
<path d="M1422.0,974.4 L1302.0,1082.8" stroke="#120a24" stroke-width="1.25" fill="none"/>
<path d="M1243.0,1079.1 L1302.0,1082.8" stroke="#120a24" stroke-width="1.25" fill="none"/>
<path d="M1236.9,1037.4 L1243.0,1079.1" stroke="#120a24" stroke-width="1.25" fill="none"/>
<path d="M1213.7,1020.5 L1219.2,1061.9" stroke="#120a24" stroke-width="1.25" fill="none"/>
<path d="M1215.0,1036.5 L1236.8,1037.2" stroke="#120a24" stroke-width="1.25" fill="none"/>
<path d="M1219.2,1061.9 L1092.1,1178.0" stroke="#120a24" stroke-width="1.25" fill="none"/>
<path d="M1092.1,1178.0 L1258.5,1181.7" stroke="#120a24" stroke-width="1.25" fill="none"/>
<path d="M1258.5,1181.7 L1387.9,1066.3" stroke="#120a24" stroke-width="1.25" fill="none"/>
<path d="M1387.9,1066.3 L1381.0,1025.0" stroke="#120a24" stroke-width="1.25" fill="none"/>
<path d="M1381.0,1025.0 L1440.0,1026.3" stroke="#120a24" stroke-width="1.25" fill="none"/>
<path d="M1430.8,967.6 L1439.4,1024.0" stroke="#120a24" stroke-width="1.25" fill="none"/>
<path d="M1253.0,1142.0 L1258.5,1181.7" stroke="#120a24" stroke-width="1.25" fill="none"/>
<path d="M1253.0,1142.0 L1381.0,1030.0" stroke="#120a24" stroke-width="1.25" fill="none"/>
<path d="M1302.0,1082.8 L1304.0,1095.0" stroke="#120a24" stroke-width="1.25" fill="none"/>
<path d="M1343.8,961.5 L1228.0,1068.0" stroke="#120a24" stroke-width="1.25" fill="none"/><!-- orange box -->
<polygon points="1146.1,959.8 1249.2,867.5 1307.6,869.9 1315,926.4 1260.2,924.7 1204.5,974.5 1154.7,1017.2" fill="#f4a20c"/>
<polygon points="1154.7,1017.2 1204.5,974.5 1260.2,924.7 1315,926.4 1212.9,1020.4" fill="#94660a"/>
<path d="M1146.1,959.8 L1249.2,867.5 L1307.6,869.9 L1315,926.4 L1212.9,1020.4 M1249.2,867.5 L1260.2,924.7 L1315,926.4 M1260.2,924.7 L1204.5,974.5" stroke="#2a1c05" stroke-width="1" fill="none"/>
<path d="M1203.8,961 L1212.9,1020.4 L1154.7,1017.2" stroke="#f7ad1a" stroke-width="2.6" fill="none"/>
<path d="M1146.1,959.8 L1154.7,1017.2" stroke="#e89a10" stroke-width="1.5" fill="none" stroke-dasharray="5 4"/>
<path d="M1146.1,959.8 L1203.8,961" stroke="#1a1a1a" stroke-width="1.2" fill="none" stroke-dasharray="12 8"/>
<circle cx="1146.5" cy="959.5" r="2.5" fill="#1a1ad0"/><circle cx="1204" cy="961" r="2.5" fill="#1a1ad0"/><circle cx="1155" cy="1017" r="2.5" fill="#1a1ad0"/>
<!-- leader lines -->
<path d="M1282.3,906 L1300,1012 M1180.5,999 L1197.5,1105 M1212.9,1020.4 L1219,1062" stroke="#111" stroke-width="1" fill="none"/>
<polygon points="1295.5,1005.5 1285.5,1017 1281.5,1012.5" fill="#111"/><polygon points="1197.5,1090.5 1207.5,1079 1211.5,1083.5" fill="#111"/>
<!-- yellow handle -->
<circle cx="1282.3" cy="897" r="8.6" fill="#f8d40a" stroke="#8f7a1a" stroke-width="1.6"/>
<!-- direction arrow -->
<path d="M1179.2,989 L1222,955.6" stroke="#ff6a1f" stroke-width="4" fill="none"/>
<polygon points="1229,950 1210.5,951.5 1220.5,965.5" fill="#ff6a1f"/>
<path d="M1229,950 L1262,922" stroke="#e8442a" stroke-width="1" stroke-dasharray="9 5" fill="none"/>
<!-- target handle -->
<circle cx="1179.2" cy="989" r="9.6" fill="#fff" stroke="#8a8a8a" stroke-width="1.4"/>
<circle cx="1179.2" cy="989" r="5.6" fill="#d8d8d8" stroke="#8a8a8a" stroke-width="1.6"/>
<circle cx="1179.2" cy="989" r="2.2" fill="#d04030"/>
<!-- snap star -->
<path d="M1206,1013 L1220,1028 M1220,1013 L1206,1028" stroke="#111" stroke-width="2"/>
<circle cx="1213" cy="1020.5" r="4.2" fill="#1a1ad0" stroke="#e8c81a" stroke-width="1.6"/>
<!-- csys -->
<path d="M988,485 L952,484.5" stroke="#f03030" stroke-width="1.6"/><polygon points="948,484.4 968,481.6 968,487.4" fill="#f03030"/>
<path d="M993,485 L987,450" stroke="#30d8f0" stroke-width="1.4"/><polygon points="986,440 984,457.5 989.8,457" fill="#30e0f8"/>
<path d="M993,485 L1010,470" stroke="#30e050" stroke-width="1.4"/><polygon points="1014,467 998.5,474.5 1002.5,480.5" fill="#30e850"/>
<text x="936" y="481" font-family="Liberation Mono, monospace" font-size="12" fill="#f05050">X</text>
<text x="974" y="437" font-family="Liberation Mono, monospace" font-size="12" fill="#60e0f8">Z</text>
<text x="1017" y="464" font-family="Liberation Mono, monospace" font-size="12" fill="#60e878">Y</text>
<text x="997" y="500" font-family="Liberation Mono, monospace" font-size="14" fill="#1a1030" textLength="115" lengthAdjust="spacing">PRT_CSYS_DEF</text>
<!-- dim label -->
<rect x="1395" y="949.5" width="52" height="24" fill="#d9d3ee" opacity="0.86"/>
<text x="1402" y="968" font-family="Liberation Mono, monospace" font-size="15" fill="#1a1a1a" textLength="38" lengthAdjust="spacing">8.00</text>
<!-- red annotation 3 -->
<ellipse cx="1437.6" cy="969.5" rx="61" ry="48" fill="none" stroke="#f2383c" stroke-width="8.5" transform="rotate(-8 1437.6 969.5)"/>
<circle cx="1475" cy="985" r="14.5" fill="#f2383c"/>
<text x="1475" y="992.5" text-anchor="middle" font-family="Liberation Serif, serif" font-size="21" fill="#fff">3</text>
</svg>
<!-- in-graphics toolbar -->
<div class="a" style="left:1317px;top:250px;width:507px;height:69px;background:#fff;border:1px solid #e4e4e4;box-sizing:border-box"></div>
<svg class="a" style="left:1317px;top:250px" width="507" height="69" viewBox="1317 250 507 69">
 <!-- zoom -->
 <rect x="1329" y="261" width="39" height="38" fill="#f4f4f4" stroke="#c7c7c7" stroke-width="1.2"/><rect x="1329" y="261" width="39" height="4" fill="#d5d5d5"/>
 <circle cx="1348" cy="283" r="12.5" fill="#e6f7fd" stroke="#9fd4e6" stroke-width="2.4"/><path d="M1358,293 L1372,305" stroke="#c9d3da" stroke-width="5" stroke-linecap="round"/>
 <!-- shading -->
 <defs><radialGradient id="sph" cx="0.35" cy="0.3" r="0.8"><stop offset="0" stop-color="#fdfdfd"/><stop offset="0.55" stop-color="#cfcfcf"/><stop offset="1" stop-color="#7d7d7d"/></radialGradient>
 <linearGradient id="blk" x1="0" y1="0" x2="1" y2="1"><stop offset="0" stop-color="#f2f2f2"/><stop offset="1" stop-color="#9a9a9a"/></linearGradient></defs>
 <polygon points="1406,278 1426,262 1438,262 1438,286 1424,296 1406,296" fill="url(#blk)"/><polygon points="1428,270 1438,262 1438,286 1428,294" fill="#8a8a8a"/>
 <circle cx="1404" cy="290" r="14.5" fill="url(#sph)"/><polygon points="1434,311 1442,311 1442,303" fill="#333"/>
 <!-- cube -->
 <polygon points="1455,275 1470,263 1499,263 1499,293 1485,305 1455,305" fill="#fff" stroke="#2a87ad" stroke-width="2"/><polygon points="1455,275 1470,263 1499,263 1485,275" fill="#9fdcf2" stroke="#2a87ad" stroke-width="1.4"/><polygon points="1485,275 1499,263 1499,293 1485,305" fill="#5fb0d0" stroke="#2a87ad" stroke-width="1.4"/><polygon points="1497,311 1505,311 1505,303" fill="#333"/>
 <!-- table camera -->
 <rect x="1517" y="262" width="40" height="42" fill="#f7f7f7" stroke="#bdbdbd" stroke-width="1.2"/><path d="M1517,270 H1557 M1517,278 H1557 M1517,286 H1557 M1517,294 H1557 M1528,262 V304" stroke="#c4c4c4" stroke-width="1.2"/>
 <rect x="1541" y="290" width="22" height="16" rx="2" fill="#555"/><rect x="1547" y="286" width="9" height="5" fill="#444"/><circle cx="1552" cy="298" r="5.5" fill="#888" stroke="#222" stroke-width="1.6"/>
 <!-- datum display -->
 <path d="M1580,264 L1592,276 M1592,264 L1580,276 M1601,262 L1597,270 M1596,276 L1588,290 M1589,297 L1583,308" stroke="#a67c3d" stroke-width="2.6" fill="none"/>
 <path d="M1605,276 V297 H1622 M1605,297 L1596,306" stroke="#a67c3d" stroke-width="1.4" fill="none"/><path d="M1602,280 L1605,275 L1608,280 M1618,294 L1623,297 L1618,300" stroke="#a67c3d" stroke-width="1.2" fill="none"/><polygon points="1620,311 1628,311 1628,303" fill="#333"/>
 <!-- csys eye (active) -->
 <rect x="1636" y="255" width="59" height="58" fill="#dcdee0" stroke="#c4c4c4" stroke-width="1"/>
 <path d="M1657,268 V291 H1684 M1657,291 L1644,305" stroke="#a67c3d" stroke-width="3.2" fill="none"/><polygon points="1657,260 1650.5,270 1663.5,270" fill="#a67c3d"/><polygon points="1690,291 1681,284.5 1681,297.5" fill="#a67c3d"/><polygon points="1640,309 1642,298.5 1650.5,307" fill="#a67c3d"/>
 <ellipse cx="1680" cy="303" rx="11" ry="6.5" fill="#444"/><circle cx="1680" cy="303" r="3.6" fill="#fff"/><circle cx="1680" cy="303" r="1.8" fill="#444"/>
 <!-- annotation -->
 <rect x="1703" y="261" width="32" height="19" fill="#fdf3e0" stroke="#c9c9c9" stroke-width="1.2"/><path d="M1735,270 H1750 L1742,290" stroke="#444" stroke-width="1.4" fill="none"/><polygon points="1736,288 1747,290 1740,296" fill="#333"/>
 <ellipse cx="1740" cy="303" rx="11" ry="6.5" fill="#444"/><circle cx="1740" cy="303" r="3.6" fill="#fff"/><circle cx="1740" cy="303" r="1.8" fill="#444"/>
 <!-- spin center -->
 <path d="M1772,267 L1788,284 H1805 M1788,284 L1772,301" stroke="#444" stroke-width="2.6" fill="none"/><circle cx="1772" cy="267" r="7.2" fill="#8fc98a" stroke="#6ea86a"/><circle cx="1806" cy="284" r="7.2" fill="#f59a94" stroke="#d87872"/><circle cx="1772" cy="301" r="7.2" fill="#74bfe6" stroke="#58a0c8"/>
</svg>
<!-- popup -->
<div class="a" style="left:166px;top:242px;width:547px;height:160px;background:#fafafa;border-right:1px solid #dcdcdc;border-bottom:1px solid #d4d4d4;box-sizing:border-box;box-shadow:1px 1px 2px rgba(0,0,0,.12)"></div>
<div class="a" style="left:426px;top:251px;width:25px;height:3px;background:repeating-linear-gradient(90deg,#b5bfc8 0 3px,transparent 3px 7px)"></div>
<div class="t" style="left:184px;top:304px;font-size:24px;color:#3c3c3c">草绘</div>
<div class="a" style="left:184px;top:341px;width:306px;height:39px;background:#ecfadc;border:1px solid #c3c9bd;box-sizing:border-box"></div>
<div class="t" style="left:194px;top:349px;font-size:24px;color:#2e2e2e">内部 截面 1</div>
<div class="a" style="left:493px;top:339px;width:201px;height:43px;background:#f5f5f5;border:1px solid #b4b4b4;box-sizing:border-box"></div>
<div class="t" style="left:493px;top:349px;width:201px;text-align:center;font-size:24px;color:#3c3c3c">编辑...</div>
<!-- red annotations 1 & 2 -->
<svg class="a" style="left:0;top:0" width="720" height="260" viewBox="0 0 720 260">
 <ellipse cx="133.5" cy="152.5" rx="60" ry="69" fill="none" stroke="#f2383c" stroke-width="9" transform="rotate(-6 133.5 152.5)"/>
 <circle cx="129" cy="192.5" r="15" fill="#f2383c"/><text x="129" y="200" text-anchor="middle" font-family="Liberation Serif, serif" font-size="22" fill="#fff">1</text>
 <ellipse cx="348" cy="117.5" rx="61" ry="38" fill="none" stroke="#f2383c" stroke-width="8.5" transform="rotate(4 348 117.5)"/>
 <circle cx="380" cy="125.5" r="15" fill="#f2383c"/><text x="380" y="133" text-anchor="middle" font-family="Liberation Serif, serif" font-size="22" fill="#fff">2</text>
</svg>
</body></html>
